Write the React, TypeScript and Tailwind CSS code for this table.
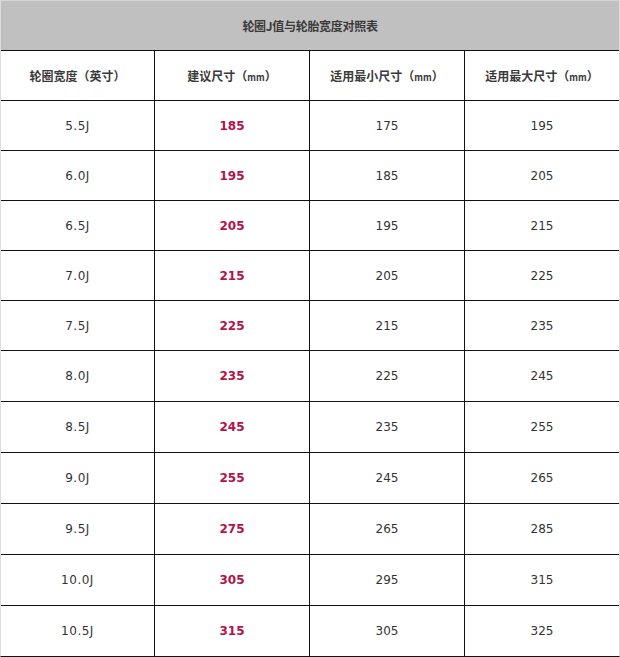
import React from "react";

const rows = [
  { rim: "5.5J", best: "185", min: "175", max: "195" },
  { rim: "6.0J", best: "195", min: "185", max: "205" },
  { rim: "6.5J", best: "205", min: "195", max: "215" },
  { rim: "7.0J", best: "215", min: "205", max: "225" },
  { rim: "7.5J", best: "225", min: "215", max: "235" },
  { rim: "8.0J", best: "235", min: "225", max: "245" },
  { rim: "8.5J", best: "245", min: "235", max: "255" },
  { rim: "9.0J", best: "255", min: "245", max: "265" },
  { rim: "9.5J", best: "275", min: "265", max: "285" },
  { rim: "10.0J", best: "305", min: "295", max: "315" },
  { rim: "10.5J", best: "315", min: "305", max: "325" },
];

const cell = "flex items-center justify-center";
const line = "border-l border-[#111]";
const grid = "grid grid-cols-[153px_155px_155px_1fr] border-t border-[#111]";

function Unit() {
  return (
    <span>
      （<span className="text-[9px]">mm</span>）
    </span>
  );
}

export default function App() {
  return (
    <div className="w-[620px] h-[657px] bg-white text-[#333] font-['Noto_Sans_CJK_SC',sans-serif]">
      <div className="flex flex-col border-x border-[#dcdcdc] border-b border-b-[#111]">
        <div className="h-[50px] bg-[#c0c0c0] border-t border-[#d6d6d6] flex items-center justify-center text-[12px] font-bold text-[#3a3a3a] tracking-[-0.3px]">
          轮圈J值与轮胎宽度对照表
        </div>

        <div className={`${grid} h-[50px] text-[12px] font-bold text-[#3a3a3a]`}>
          <div className={cell}>轮圈宽度（英寸）</div>
          <div className={`${cell} ${line}`}>
            建议尺寸<Unit />
          </div>
          <div className={`${cell} ${line}`}>
            适用最小尺寸<Unit />
          </div>
          <div className={`${cell} ${line}`}>
            适用最大尺寸<Unit />
          </div>
        </div>

        {rows.map((r, i) => (
          <div
            key={r.rim}
            className={`${grid} ${i < 5 ? "h-[50px]" : "h-[51px]"} text-[12px] font-['DejaVu_Sans',sans-serif]`}
          >
            <div className={`${cell} tracking-[0.5px]`}>{r.rim}</div>
            <div className={`${cell} ${line} font-bold text-[#b3124a]`}>{r.best}</div>
            <div className={`${cell} ${line}`}>{r.min}</div>
            <div className={`${cell} ${line}`}>{r.max}</div>
          </div>
        ))}
      </div>
    </div>
  );
}
